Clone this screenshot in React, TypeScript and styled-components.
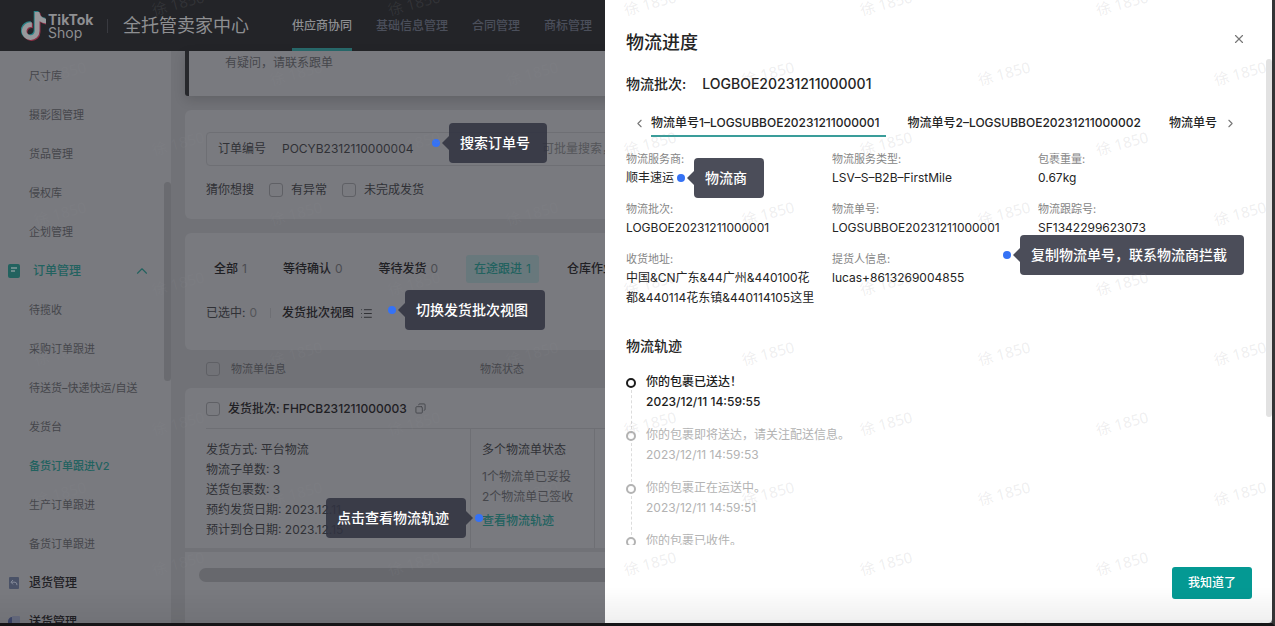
import React from 'react';
import styled, { createGlobalStyle, css } from 'styled-components';
import { FaTiktok } from 'react-icons/fa6';
import { ChevronLeft, ChevronRight, ChevronUp, Copy, List, X } from 'lucide-react';

const c = {
  header: '#232428',
  panel: '#797a7f',
  gutter: '#717277',
  line: '#6e6f74',
  text: '#303136',
  strong: '#1f2024',
  dim: '#45464b',
  faint: '#545559',
  teal: '#22625f',
};

const GlobalStyle = createGlobalStyle`
  *, *::before, *::after { box-sizing: border-box; }
  body {
    margin: 0;
    overflow: hidden;
    font-family: Inter, "Noto Sans CJK SC", sans-serif;
    font-size: 12px;
    line-height: 20px;
    color: ${c.text};
  }
  button, input { font: inherit; color: inherit; }
  button { background: none; border: 0; padding: 0; cursor: pointer; }
  h1, h2, h3, p, ul, ol, dl, dd { margin: 0; padding: 0; font-weight: inherit; font-size: inherit; }
  ul, ol { list-style: none; }
  a { color: inherit; text-decoration: none; }
`;

const Screen = styled.div`
  position: relative;
  height: 100vh;
  overflow: hidden;
  display: flex;
  flex-direction: column;
  background: ${c.gutter};
  border-right: 3px solid #343536;
  border-bottom: 3px solid #151416;
`;

const BottomShade = styled.div`
  position: absolute;
  inset: auto 0 0 0;
  height: 36px;
  pointer-events: none;
  background: linear-gradient(transparent, rgba(0, 0, 0, 0.06));
  border-bottom: 3px solid rgba(0, 0, 0, 0.08);
`;

/* Top bar */
const TopBar = styled.header`
  flex: none;
  height: 51px;
  display: flex;
  align-items: center;
  padding-left: 21px;
  background: ${c.header};
  color: #8e8f92;
`;

const Brand = styled.div`
  display: flex;
  align-items: center;
  gap: 2px;
  width: 86px;
  font-size: 14px;
  line-height: 13px;
`;

const BrandName = styled.div`
  display: flex;
  flex-direction: column;
  strong { font-weight: 700; }
`;

const SiteTitle = styled.h1`
  border-left: 1px solid #393a40;
  padding-left: 15px;
  width: 185px;
  font-size: 18px;
  line-height: 14px;
  white-space: nowrap;
`;

const Nav = styled.nav`
  align-self: stretch;
  display: flex;
  gap: 24px;
`;

const NavLink = styled.a<{ $active?: boolean }>`
  display: flex;
  align-items: center;
  white-space: nowrap;
  font-weight: 500;
  border-top: 3px solid transparent;
  border-bottom: 3px solid ${p => (p.$active ? '#28696b' : 'transparent')};
  color: ${p => (p.$active ? '#8e8f92' : '#4b4f5b')};
`;

/* Side menu */
const Layout = styled.div`
  flex: 1;
  min-height: 0;
  display: flex;
`;

const Sidebar = styled.aside`
  position: relative;
  flex: none;
  width: 171px;
  padding-top: 5px;
  overflow: hidden;
  background: ${c.panel};
`;

const SideThumb = styled.div`
  position: absolute;
  top: 131px;
  right: 0;
  width: 7px;
  height: 199px;
  border-radius: 4px;
  background: #6a6b70;
`;

const SideLink = styled.a<{ $active?: boolean }>`
  display: flex;
  align-items: center;
  height: 39px;
  padding-left: 29px;
  font-size: 11px;
  color: ${c.dim};
  ${p => p.$active && css`color: ${c.teal}; font-weight: 500;`}
`;

const SideGroup = styled.button<{ $active?: boolean }>`
  display: flex;
  align-items: center;
  width: 100%;
  height: 39px;
  padding: 0 20px 0 8px;
  gap: ${p => (p.$active ? 13 : 9)}px;
  font-weight: 500;
  color: ${p => (p.$active ? c.teal : c.strong)};
  svg:last-child:not(:first-child) { margin-left: auto; }
`;

/* Page content */
const Content = styled.main`
  flex: 1;
  min-width: 0;
  padding-left: 14px;
  display: flex;
  flex-direction: column;
`;

const Notice = styled.section`
  flex: none;
  height: 45px;
  padding: 2px 0 0 36px;
  border-left: 4px solid #27282c;
  border-radius: 0 0 0 3px;
  background: ${c.panel};
  box-shadow: 0 4px 12px rgba(0, 0, 0, 0.14);
  color: ${c.dim};
`;

const Card = styled.section`
  flex: none;
  margin-top: 14px;
  padding: 22px 0 19px 21px;
  border-radius: 6px 0 0 6px;
  background: ${c.panel};
`;

const SearchBox = styled.div`
  display: flex;
  align-items: center;
  height: 34px;
  padding-left: 11px;
  border: 1px solid ${c.line};
  border-radius: 4px;
  label { width: 64px; }
`;

const SearchInput = styled.input<{ $width: number }>`
  width: ${p => p.$width}px;
  padding: 0;
  border: 0;
  outline: 0;
  background: transparent;
  &::placeholder { color: ${c.faint}; opacity: 1; }
`;

const FilterRow = styled.div`
  display: flex;
  align-items: center;
  margin-top: 14px;
  gap: 15px;
  label { display: flex; align-items: center; gap: 8px; }
`;

const Check = styled.input.attrs({ type: 'checkbox' })`
  appearance: none;
  flex: none;
  width: 14px;
  height: 14px;
  margin: 0;
  border: 1px solid #5f6065;
  border-radius: 3px;
`;

const StatusTabs = styled.div`
  display: flex;
  gap: 20px;
`;

const StatusTab = styled.button<{ $active?: boolean }>`
  flex: none;
  height: 28px;
  padding: 0 8px;
  border-radius: 3px;
  font-weight: 500;
  color: ${p => (p.$active ? c.teal : c.strong)};
  background: ${p => (p.$active ? '#68787c' : 'transparent')};
  span {
    margin-left: 4px;
    font-weight: 400;
    color: ${p => (p.$active ? 'inherit' : '#4b4c51')};
  }
`;

const ViewRow = styled.div`
  display: flex;
  align-items: center;
  margin: 20px 0 8px;
  span { color: ${c.faint}; margin-left: 4px; }
  button {
    display: flex;
    align-items: center;
    gap: 6px;
    margin-left: 13px;
    padding-left: 12px;
    font-weight: 500;
    color: ${c.strong};
    background: linear-gradient(${c.line}, ${c.line}) left center / 1px 10px no-repeat;
  }
`;

const TableView = styled.table`
  flex: none;
  width: 1060px;
  table-layout: fixed;
  border-collapse: separate;
  border-spacing: 0;
  text-align: left;
`;

const HeadCell = styled.th<{ $pad: number }>`
  height: 38px;
  padding: 0 0 0 ${p => p.$pad}px;
  font-size: 11px;
  font-weight: 400;
  color: ${c.dim};
`;

const Inline = styled.label<{ $gap: number }>`
  display: flex;
  align-items: center;
  gap: ${p => p.$gap}px;
`;

const CopyIcon = styled(Copy)`
  transform: scaleX(-1);
  color: ${c.dim};
`;

const BatchCell = styled.td`
  height: 41px;
  padding: 0 0 0 21px;
  border-radius: 6px 0 0 0;
  background: linear-gradient(${c.line}, ${c.line}) 21px 100% / 100% 1px no-repeat ${c.panel};
  font-weight: 500;
  color: ${c.strong};
`;

const Cell = styled.td<{ $first?: boolean }>`
  height: 119px;
  vertical-align: top;
  padding: 11px 0 8px ${p => (p.$first ? 21 : 11)}px;
  border-left: ${p => (p.$first ? 0 : 1)}px solid ${c.line};
  background: ${c.panel};
`;

const States = styled.ul`
  margin: 7px 0 4px;
  color: ${c.dim};
`;

const TrackLink = styled.a`
  font-weight: 500;
  color: ${c.teal};
`;

const Rest = styled.div`
  flex: 1;
  margin-top: 4px;
  padding: 16px 0 0 14px;
  background: ${c.panel};
`;

const ScrollThumb = styled.div`
  height: 14px;
  border-radius: 7px 0 0 7px;
  background: #67686d;
`;

/* Drawer */
const Drawer = styled.aside`
  position: absolute;
  top: 0;
  right: 0;
  bottom: 0;
  width: 667px;
  max-width: 100%;
  display: flex;
  flex-direction: column;
  border-radius: 0 0 4px 0;
  background: #fff;
  color: #242424;
`;

const DrawerHead = styled.div`
  flex: none;
  display: flex;
  align-items: flex-start;
  justify-content: space-between;
  height: 60px;
  padding: 26px 26px 0 21px;
  h2 { font-size: 18px; line-height: 34px; font-weight: 500; }
  button { height: 26px; display: flex; align-items: center; color: #777; }
`;

const DrawerBody = styled.div`
  flex: 1;
  min-height: 0;
  overflow: hidden;
  padding: 14px 28px 0 21px;
`;

const DrawerThumb = styled.div`
  position: absolute;
  top: 59px;
  right: 0;
  width: 6px;
  height: 358px;
  border-radius: 3px;
  background: #e2e2e2;
`;

const DrawerFoot = styled.div`
  flex: none;
  height: 78px;
  padding: 22px 20px 0;
  display: flex;
  justify-content: flex-end;
  align-items: flex-start;
`;

const PrimaryButton = styled.button`
  width: 80px;
  height: 32px;
  border-radius: 3px;
  background: #049993;
  color: #fff;
  font-weight: 500;
`;

const BatchLine = styled.p`
  display: flex;
  gap: 16px;
  font-size: 14px;
  font-weight: 500;
`;

const WaybillBar = styled.div`
  display: flex;
  align-items: center;
  margin-top: 15px;
  padding-left: 7px;
  color: #777;
`;

const WaybillTabs = styled.div`
  display: flex;
  gap: 22px;
  width: 569px;
  margin: 0 4px 0 5px;
`;

const WaybillTab = styled.button<{ $active?: boolean }>`
  height: 28px;
  flex: none;
  padding-right: 6px;
  white-space: nowrap;
  font-weight: 500;
  color: #242424;
  border-top: 2px solid transparent;
  border-bottom: 2px solid ${p => (p.$active ? '#3a9d9a' : 'transparent')};
`;

const InfoGrid = styled.dl`
  display: grid;
  grid-template-columns: repeat(3, 194px);
  gap: 12px;
  margin-top: 13px;
  dt { font-size: 11px; line-height: 18px; color: #858585; }
  dd { word-break: break-all; }
`;

const TrackTitle = styled.h3`
  margin-top: 28px;
  font-size: 14px;
  font-weight: 500;
`;

const Timeline = styled.ol`
  margin-top: 16px;
`;

const Step = styled.li<{ $current?: boolean }>`
  position: relative;
  height: 53px;
  padding-left: 20px;
  font-weight: ${p => (p.$current ? 500 : 400)};
  color: ${p => (p.$current ? '#1c1c1c' : '#b3b3b3')};
  &::before {
    content: '';
    position: absolute;
    left: 0;
    top: 6px;
    width: 10px;
    height: 10px;
    border: 2px solid ${p => (p.$current ? '#1c1c1c' : '#b3b3b3')};
    border-radius: 50%;
  }
  &::after {
    content: '';
    position: absolute;
    left: 5px;
    top: 18px;
    bottom: -4px;
    border-left: 1px dashed #dcdcdc;
  }
`;

/* Guide callouts */
const CalloutWrap = styled.div<{ $x: number; $y: number; $flip?: boolean }>`
  position: absolute;
  left: ${p => p.$x}px;
  top: ${p => p.$y}px;
  display: flex;
  flex-direction: ${p => (p.$flip ? 'row-reverse' : 'row')};
  align-items: center;
`;

const Dot = styled.i`
  width: 8px;
  height: 8px;
  margin: 0 2px;
  border-radius: 50%;
  background: #3572f5;
`;

const Arrow = styled.i<{ $flip?: boolean }>`
  width: 7px;
  height: 14px;
  background: rgba(48, 50, 64, 0.87);
  clip-path: ${p => (p.$flip ? 'polygon(0 0, 100% 50%, 0 100%)' : 'polygon(100% 0, 0 50%, 100% 100%)')};
`;

const Bubble = styled.span`
  height: 40px;
  padding: 0 17px 0 11px;
  border-radius: 4px;
  background: rgba(48, 50, 64, 0.87);
  color: #fff;
  font-size: 14px;
  font-weight: 500;
  line-height: 40px;
  white-space: nowrap;
`;

function Callout({ x, y, flip, children }: { x: number; y: number; flip?: boolean; children: string }) {
  return (
    <CalloutWrap $x={x} $y={y} $flip={flip} role="tooltip">
      <Dot />
      <Arrow $flip={flip} />
      <Bubble>{children}</Bubble>
    </CalloutWrap>
  );
}

/* Viewer watermark, staggered rows of the same mark */
const MarkLayer = styled.div`
  position: absolute;
  inset: -32px 0 0 0;
  overflow: hidden;
  pointer-events: none;
  color: rgba(140, 140, 146, 0.15);
  font-family: "Noto Sans", "Noto Sans CJK SC", sans-serif;
  font-size: 15px;
`;

const MarkRow = styled.div<{ $shift: boolean }>`
  display: flex;
  height: 70px;
  margin-left: ${p => (p.$shift ? -58 : 60)}px;
`;

const Mark = styled.span`
  flex: none;
  display: flex;
  align-items: center;
  justify-content: center;
  width: 236px;
  transform: rotate(-15deg);
`;

function Watermark() {
  return (
    <MarkLayer aria-hidden="true">
      {Array.from({ length: 10 }, (_, r) => (
        <MarkRow key={r} $shift={r % 2 === 1}>
          {Array.from({ length: 6 }, (_, i) => <Mark key={i}>徐 1850</Mark>)}
        </MarkRow>
      ))}
    </MarkLayer>
  );
}

function BrandLogo() {
  return (
    <svg width="25" height="30" viewBox="0 0 25 30" aria-label="TikTok">
      <FaTiktok size={28} x={-2} y={0} color="#2a8287" />
      <FaTiktok size={28} x={0} y={2} color="#8c2f45" />
      <FaTiktok size={28} x={-1} y={1} color="#98999c" />
    </svg>
  );
}

function OrderIcon() {
  return (
    <svg width="12" height="14" viewBox="0 0 12 14">
      <rect width="12" height="14" rx="2" fill={c.teal} />
      <path d="M3 4h6M3 7h4" stroke="#83999a" strokeWidth="1.3" />
    </svg>
  );
}

function ReturnIcon() {
  return (
    <svg width="12" height="14" viewBox="0 0 12 14">
      <rect x="1" y="1" width="10" height="12" rx="1" fill="#4a5267" />
      <path d="M5 4 3 6.2 5 8.4M3.2 6.2H7q2 0 2 3" fill="none" stroke="#848a99" />
    </svg>
  );
}

function DeliveryIcon() {
  return (
    <svg width="12" height="14" viewBox="0 0 12 14">
      <path d="M0 13V6q1-4 4-4v11z" fill="#3d466b" />
      <rect x="4" y="1" width="8" height="12" rx="1" fill="#676c80" />
    </svg>
  );
}

const baseMenu = ['尺寸库', '摄影图管理', '货品管理', '侵权库', '企划管理'];
const orderMenu = ['待揽收', '采购订单跟进', '待送货–快递快运/自送', '发货台', '备货订单跟进V2', '生产订单跟进', '备货订单跟进'];
const navItems = ['供应商协同', '基础信息管理', '合同管理', '商标管理'];
const statusTabs: [string, string][] = [['全部', '1'], ['等待确认', '0'], ['等待发货', '0'], ['在途跟进', '1'], ['仓库作业', '0']];
const info: [string, string][] = [
  ['物流服务商:', '顺丰速运'],
  ['物流服务类型:', 'LSV–S–B2B–FirstMile'],
  ['包裹重量:', '0.67kg'],
  ['物流批次:', 'LOGBOE20231211000001'],
  ['物流单号:', 'LOGSUBBOE20231211000001'],
  ['物流跟踪号:', 'SF1342299623073'],
  ['收货地址:', '中国&CN广东&44广州&440100花都&440114花东镇&440114105这里'],
  ['提货人信息:', 'lucas+8613269004855'],
];
const steps: [string, string][] = [
  ['你的包裹已送达！', '2023/12/11 14:59:55'],
  ['你的包裹即将送达，请关注配送信息。', '2023/12/11 14:59:53'],
  ['你的包裹正在运送中。', '2023/12/11 14:59:51'],
  ['你的包裹已收件。', '2023/12/11 14:59:50'],
];

export default function App() {
  return (
    <>
      <GlobalStyle />
      <Screen>
        <TopBar>
          <Brand>
            <BrandLogo />
            <BrandName>
              <strong>TikTok</strong>
              <span>Shop</span>
            </BrandName>
          </Brand>
          <SiteTitle>全托管卖家中心</SiteTitle>
          <Nav>
            {navItems.map((n, i) => <NavLink key={n} href="#" $active={i === 0}>{n}</NavLink>)}
          </Nav>
        </TopBar>

        <Layout>
          <Sidebar>
            {baseMenu.map(m => <SideLink key={m} href="#">{m}</SideLink>)}
            <SideGroup $active><OrderIcon />订单管理<ChevronUp size={18} strokeWidth={1.5} /></SideGroup>
            {orderMenu.map(m => <SideLink key={m} href="#" $active={m.endsWith('V2')}>{m}</SideLink>)}
            <SideGroup><ReturnIcon />退货管理</SideGroup>
            <SideGroup><DeliveryIcon />送货管理</SideGroup>
            <SideThumb />
          </Sidebar>

          <Content>
            <Notice>有疑问，请联系跟单</Notice>

            <Card>
              <SearchBox>
                <label htmlFor="order-no">订单编号</label>
                <SearchInput id="order-no" $width={260} defaultValue="POCYB2312110000004" />
                <SearchInput aria-label="批量搜索" $width={300} placeholder="可批量搜索，用逗号分隔" />
              </SearchBox>
              <FilterRow>
                猜你想搜
                <label><Check />有异常</label>
                <label><Check />未完成发货</label>
              </FilterRow>
            </Card>

            <Card>
              <StatusTabs>
                {statusTabs.map(([name, count]) => (
                  <StatusTab key={name} $active={name === '在途跟进'}>{name}<span>{count}</span></StatusTab>
                ))}
              </StatusTabs>
              <ViewRow>
                已选中:<span>0</span>
                <button>发货批次视图<List size={13} strokeWidth={1.5} /></button>
              </ViewRow>
            </Card>

            <TableView>
              <colgroup>
                <col width={285} />
                <col width={124} />
                <col />
              </colgroup>
              <thead>
                <tr>
                  <HeadCell $pad={21}><Inline $gap={11}><Check />物流单信息</Inline></HeadCell>
                  <HeadCell $pad={10}>物流状态</HeadCell>
                  <HeadCell $pad={10} />
                </tr>
              </thead>
              <tbody>
                <tr>
                  <BatchCell colSpan={3}>
                    <Inline $gap={8}>
                      <Check />
                      <span>发货批次: FHPCB231211000003</span>
                      <CopyIcon size={11} strokeWidth={2} />
                    </Inline>
                  </BatchCell>
                </tr>
                <tr>
                  <Cell $first>
                    发货方式: 平台物流<br />
                    物流子单数: 3<br />
                    送货包裹数: 3<br />
                    预约发货日期: 2023.12.11<br />
                    预计到仓日期: 2023.12.15
                  </Cell>
                  <Cell>
                    多个物流单状态
                    <States>
                      <li>1个物流单已妥投</li>
                      <li>2个物流单已签收</li>
                    </States>
                    <TrackLink href="#">查看物流轨迹</TrackLink>
                  </Cell>
                  <Cell />
                </tr>
              </tbody>
            </TableView>
            <Rest><ScrollThumb /></Rest>
          </Content>
        </Layout>

        <Drawer role="dialog" aria-label="物流进度">
          <DrawerHead>
            <h2>物流进度</h2>
            <button aria-label="关闭"><X size={14} strokeWidth={2} /></button>
          </DrawerHead>
          <DrawerBody>
            <BatchLine><span>物流批次:</span><span>LOGBOE20231211000001</span></BatchLine>
            <WaybillBar>
              <ChevronLeft size={13} />
              <WaybillTabs>
                <WaybillTab $active>物流单号1–LOGSUBBOE20231211000001</WaybillTab>
                <WaybillTab>物流单号2–LOGSUBBOE20231211000002</WaybillTab>
                <WaybillTab>物流单号</WaybillTab>
              </WaybillTabs>
              <ChevronRight size={13} />
            </WaybillBar>
            <InfoGrid>
              {info.map(([k, v]) => <div key={k}><dt>{k}</dt><dd>{v}</dd></div>)}
            </InfoGrid>
            <TrackTitle>物流轨迹</TrackTitle>
            <Timeline>
              {steps.map(([t, d], i) => <Step key={d} $current={i === 0}>{t}<br />{d}</Step>)}
            </Timeline>
          </DrawerBody>
          <DrawerFoot><PrimaryButton>我知道了</PrimaryButton></DrawerFoot>
          <DrawerThumb />
          <Callout x={70} y={158}>物流商</Callout>
          <Callout x={396} y={235}>复制物流单号，联系物流商拦截</Callout>
        </Drawer>

        <Callout x={430} y={123}>搜索订单号</Callout>
        <Callout x={386} y={290}>切换发货批次视图</Callout>
        <Callout x={326} y={498} flip>点击查看物流轨迹</Callout>
        <Watermark />
        <BottomShade />
      </Screen>
    </>
  );
}
